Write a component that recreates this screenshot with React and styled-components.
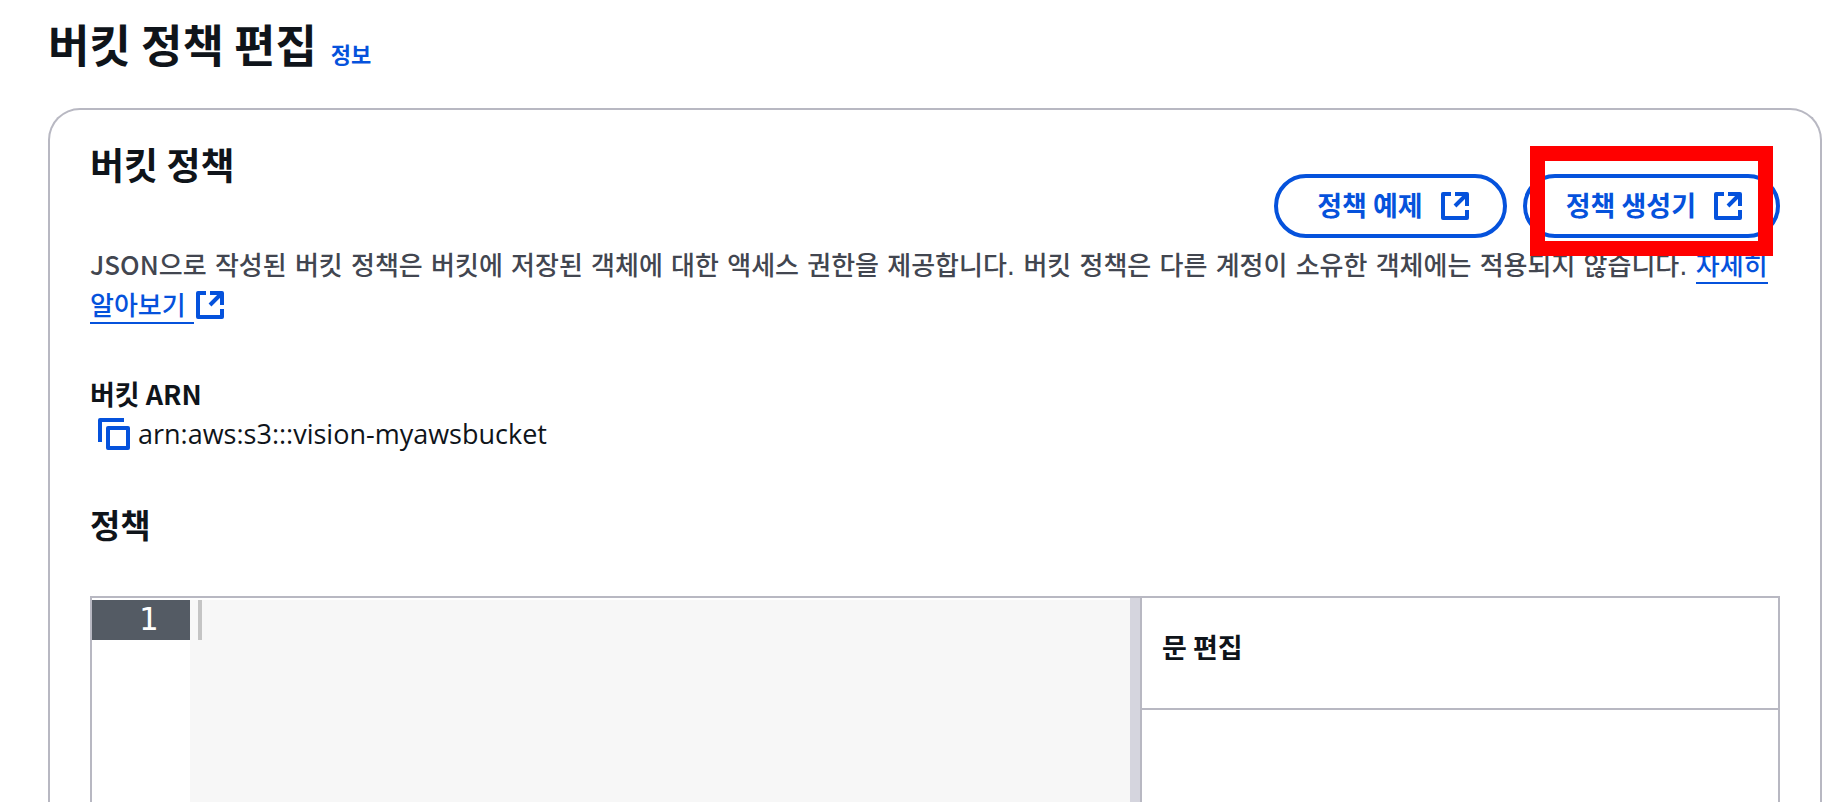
import styled, { createGlobalStyle } from "styled-components";

const GlobalStyle = createGlobalStyle`
  * {
    box-sizing: border-box;
  }
  body {
    margin: 0;
    background: #ffffff;
    color: #0f141a;
    font-family: "Noto Sans CJK KR", sans-serif;
    font-size: 27px;
    line-height: 40px;
    word-break: keep-all;
  }
  #root {
    height: 100vh;
    overflow: hidden;
  }
`;
const Page = styled.main`
  min-height: 100vh;
  padding: 14px 24px 0 48px;
  display: flex;
  flex-direction: column;
`;
const PageHeader = styled.header`
  display: flex;
  align-items: baseline;
  gap: 14px;
  margin-bottom: 34px;
`;
const PageTitle = styled.h1`
  margin: 0;
  font-size: 45px;
  line-height: 60px;
  font-weight: 700;
`;
const InfoLink = styled.a`
  color: #0552dc;
  font-size: 22px;
  font-weight: 700;
  text-decoration: none;
`;
const Card = styled.section`
  flex: 1;
  display: flex;
  flex-direction: column;
  padding: 30px 40px 0;
  border: 2px solid #b8b8c2;
  border-bottom: 0;
  border-radius: 32px 32px 0 0;
`;
const CardHeader = styled.div`
  display: flex;
  justify-content: space-between;
  align-items: flex-start;
  margin-bottom: 8px;
`;
const CardTitle = styled.h2`
  margin: 0;
  font-size: 37px;
  line-height: 48px;
  font-weight: 700;
`;
const Actions = styled.div`
  display: flex;
  gap: 16px;
  padding-top: 34px;
`;
const ActionButton = styled.button`
  height: 64px;
  padding: 0 34px 4px 39px;
  display: flex;
  align-items: center;
  gap: 18px;
  border: 4px solid #0552dc;
  border-radius: 32px;
  background: #ffffff;
  color: #0552dc;
  font-family: inherit;
  font-size: 27px;
  font-weight: 700;
  cursor: pointer;

  svg {
    margin-top: 4px;
  }
`;
const Marked = styled.div`
  position: relative;
`;
const Marker = styled.div`
  position: absolute;
  top: -28px;
  bottom: -18px;
  left: 7px;
  right: 7px;
  border: 15px solid #ff0000;
  pointer-events: none;
`;
const Description = styled.p`
  margin: 0 0 48px;
  color: #424650;
  font-family: "DejaVu Sans", "Noto Sans CJK KR", sans-serif;
  font-size: 26px;
  font-weight: 500;
`;
const Term = styled.span`
  font-family: "Noto Sans CJK KR", sans-serif;
  line-height: 1;
`;
const LearnMore = styled.a`
  color: #0552dc;
  text-decoration: none;

  span {
    padding-bottom: 1px;
    border-bottom: 2px solid #0552dc;
  }
  svg {
    vertical-align: -4px;
    margin-left: 2px;
  }
`;
const Icon = styled.svg`
  width: ${props => props.$size}px;
  height: ${props => props.$size}px;
  flex: none;
  fill: none;
  stroke: #0552dc;
  stroke-width: 4px;
  stroke-linejoin: round;
`;
const FieldLabel = styled.div`
  font-weight: 700;
`;
const ArnRow = styled.div`
  display: flex;
  align-items: center;
  gap: 8px;
  padding-left: 8px;
  margin-bottom: 46px;
`;
const ArnValue = styled.span`
  font-family: "Open Sans", sans-serif;
  font-size: 27px;
  font-weight: 500;
`;
const CopyButton = styled.button`
  display: flex;
  padding: 0;
  border: 0;
  background: none;
  cursor: pointer;
`;
const SubTitle = styled.h3`
  margin: 0 0 48px;
  font-size: 33px;
  line-height: 48px;
  font-weight: 700;
`;
const Editor = styled.div`
  flex: 1;
  display: grid;
  grid-template-columns: minmax(0, 1fr) 10px 638px;
  border: 2px solid #b8b8c2;
  border-bottom: 0;
`;
const CodePane = styled.div`
  display: flex;
  padding-top: 2px;
`;
const Gutter = styled.div`
  width: 98px;
`;
const LineNumber = styled.div`
  height: 40px;
  padding-right: 32px;
  background: #545b64;
  color: #ffffff;
  font-family: "DejaVu Sans Mono", monospace;
  font-size: 32px;
  line-height: 38px;
  text-align: right;
`;
const CodeInput = styled.textarea`
  flex: 1;
  min-width: 0;
  padding: 0 8px;
  border: 0;
  outline: 0;
  resize: none;
  background: linear-gradient(#c4c4c4, #c4c4c4) 8px 0 / 4px 40px no-repeat #f7f7f7;
  font-family: "Liberation Mono", monospace;
  font-size: 28px;
  line-height: 40px;
`;
const Splitter = styled.div`
  background: #d5d5de;
`;
const SidePane = styled.aside`
  border-left: 2px solid #b8b8c2;
`;
const SideTitle = styled.h4`
  margin: 0;
  padding: 29px 20px 41px;
  border-bottom: 2px solid #b8b8c2;
  font-size: 27px;
  font-weight: 700;
`;

function ExternalIcon() {
  return (
    <Icon $size={28} viewBox="0 0 28 28" aria-hidden="true">
      <path d="M10 2H2v24h24v-8M14 2h12v12M25 3 14 14" />
    </Icon>
  );
}

function CopyIcon() {
  return (
    <Icon $size={32} viewBox="0 0 32 32" aria-hidden="true">
      <path d="M2 24V2h24M10 10h20v20H10z" />
    </Icon>
  );
}

export default function App() {
  return (
    <>
      <GlobalStyle />
      <Page>
        <PageHeader>
          <PageTitle>버킷 정책 편집</PageTitle>
          <InfoLink href="#info">정보</InfoLink>
        </PageHeader>
        <Card>
          <CardHeader>
            <CardTitle>버킷 정책</CardTitle>
            <Actions>
              <ActionButton type="button">
                정책 예제
                <ExternalIcon />
              </ActionButton>
              <Marked>
                <ActionButton type="button">
                  정책 생성기
                  <ExternalIcon />
                </ActionButton>
                <Marker />
              </Marked>
            </Actions>
          </CardHeader>
          <Description>
            <Term>JSON</Term>으로 작성된 버킷 정책은 버킷에 저장된 객체에 대한 액세스 권한을
            제공합니다. 버킷 정책은 다른 계정이 소유한 객체에는 적용되지 않습니다.{" "}
            <LearnMore href="#learn-more">
              <span>자세히 알아보기 </span>
              <ExternalIcon />
            </LearnMore>
          </Description>
          <FieldLabel>버킷 ARN</FieldLabel>
          <ArnRow>
            <CopyButton type="button" aria-label="ARN 복사">
              <CopyIcon />
            </CopyButton>
            <ArnValue>arn:aws:s3:::vision-myawsbucket</ArnValue>
          </ArnRow>
          <SubTitle>정책</SubTitle>
          <Editor>
            <CodePane>
              <Gutter>
                <LineNumber>1</LineNumber>
              </Gutter>
              <CodeInput aria-label="정책" spellCheck={false} />
            </CodePane>
            <Splitter />
            <SidePane>
              <SideTitle>문 편집</SideTitle>
            </SidePane>
          </Editor>
        </Card>
      </Page>
    </>
  );
}
